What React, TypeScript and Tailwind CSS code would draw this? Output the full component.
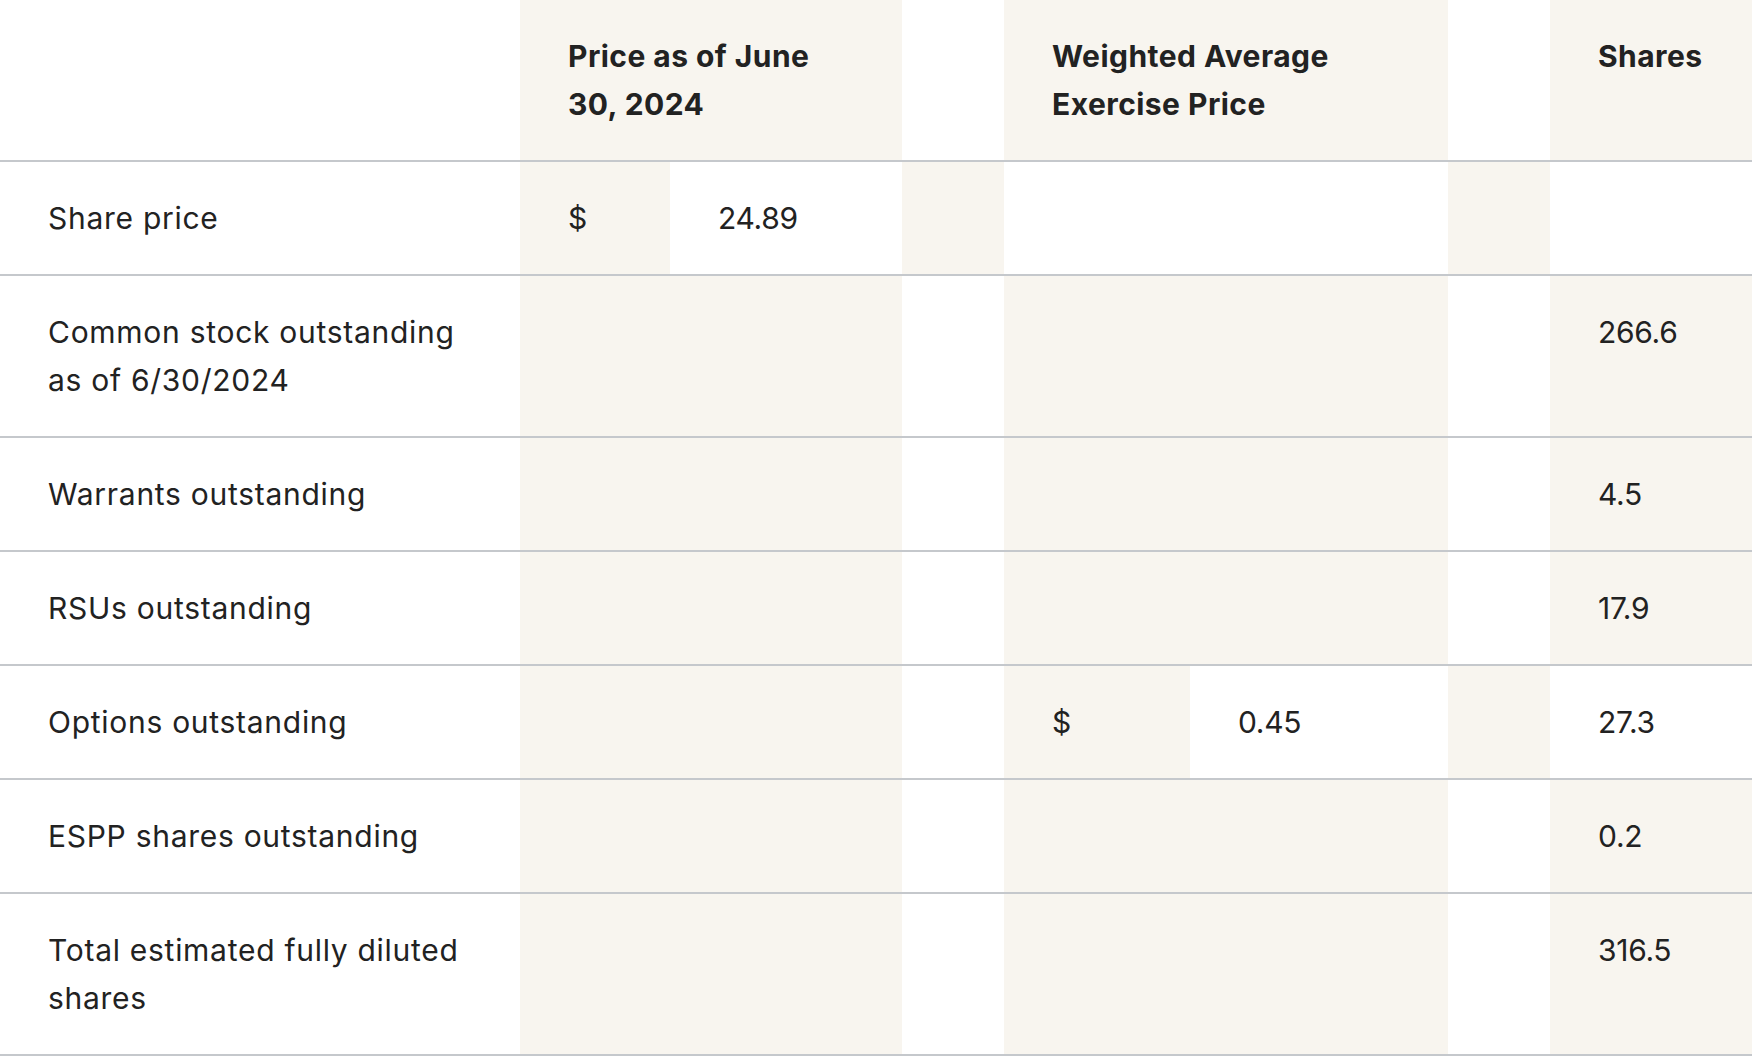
import type { ReactNode } from "react";

const Td = ({
  children,
  shaded = false,
  span = 1,
  head = false,
  label = false,
}: {
  children?: ReactNode;
  shaded?: boolean;
  span?: number;
  head?: boolean;
  label?: boolean;
}) => {
  const tracking = head ? "font-bold tracking-[0.015em]" : label ? "font-normal tracking-[0.024em]" : "font-normal tracking-[-0.01em]";
  const cls = `align-top px-12 py-8 text-left ${shaded ? "bg-[#f8f5ef]" : "bg-white"} ${tracking}`;
  return head ? (
    <th colSpan={span} className={cls}>
      {children}
    </th>
  ) : (
    <td colSpan={span} className={cls}>
      {children}
    </td>
  );
};

const plainRows = [
  { label: "Common stock outstanding as of 6/30/2024", shares: "266.6" },
  { label: "Warrants outstanding", shares: "4.5" },
  { label: "RSUs outstanding", shares: "17.9" },
];

const App = () => {
  return (
    <div className="w-[1752px] min-h-[1056px] bg-white overflow-hidden">
      <table className="table-fixed border-collapse w-[1752px] font-['Inter',sans-serif] text-[30px] leading-[48px] text-[#222]">
        <colgroup>
          <col className="w-[520px]" />
          <col className="w-[150px]" />
          <col className="w-[232px]" />
          <col className="w-[102px]" />
          <col className="w-[186px]" />
          <col className="w-[258px]" />
          <col className="w-[102px]" />
          <col className="w-[202px]" />
        </colgroup>
        <thead>
          <tr className="border-b-2 border-[#c5c8cc]">
            <Td head />
            <Td head shaded span={2}>
              Price as of June 30, 2024
            </Td>
            <Td head />
            <Td head shaded span={2}>
              Weighted Average Exercise Price
            </Td>
            <Td head />
            <Td head shaded>
              Shares
            </Td>
          </tr>
        </thead>
        <tbody>
          <tr className="border-b-2 border-[#c5c8cc]">
            <Td label>Share price</Td>
            <Td shaded>$</Td>
            <Td>24.89</Td>
            <Td shaded />
            <Td span={2} />
            <Td shaded />
            <Td />
          </tr>

          {plainRows.map((r) => (
            <tr key={r.label} className="border-b-2 border-[#c5c8cc]">
              <Td label>{r.label}</Td>
              <Td shaded span={2} />
              <Td />
              <Td shaded span={2} />
              <Td />
              <Td shaded>{r.shares}</Td>
            </tr>
          ))}

          <tr className="border-b-2 border-[#c5c8cc]">
            <Td label>Options outstanding</Td>
            <Td shaded span={2} />
            <Td />
            <Td shaded>$</Td>
            <Td>0.45</Td>
            <Td shaded />
            <Td>27.3</Td>
          </tr>

          {[
            { label: "ESPP shares outstanding", shares: "0.2" },
            { label: "Total estimated fully diluted shares", shares: "316.5" },
          ].map((r) => (
            <tr key={r.label} className="border-b-2 border-[#c5c8cc]">
              <Td label>{r.label}</Td>
              <Td shaded span={2} />
              <Td />
              <Td shaded span={2} />
              <Td />
              <Td shaded>{r.shares}</Td>
            </tr>
          ))}
        </tbody>
      </table>
    </div>
  );
};

export default App;
